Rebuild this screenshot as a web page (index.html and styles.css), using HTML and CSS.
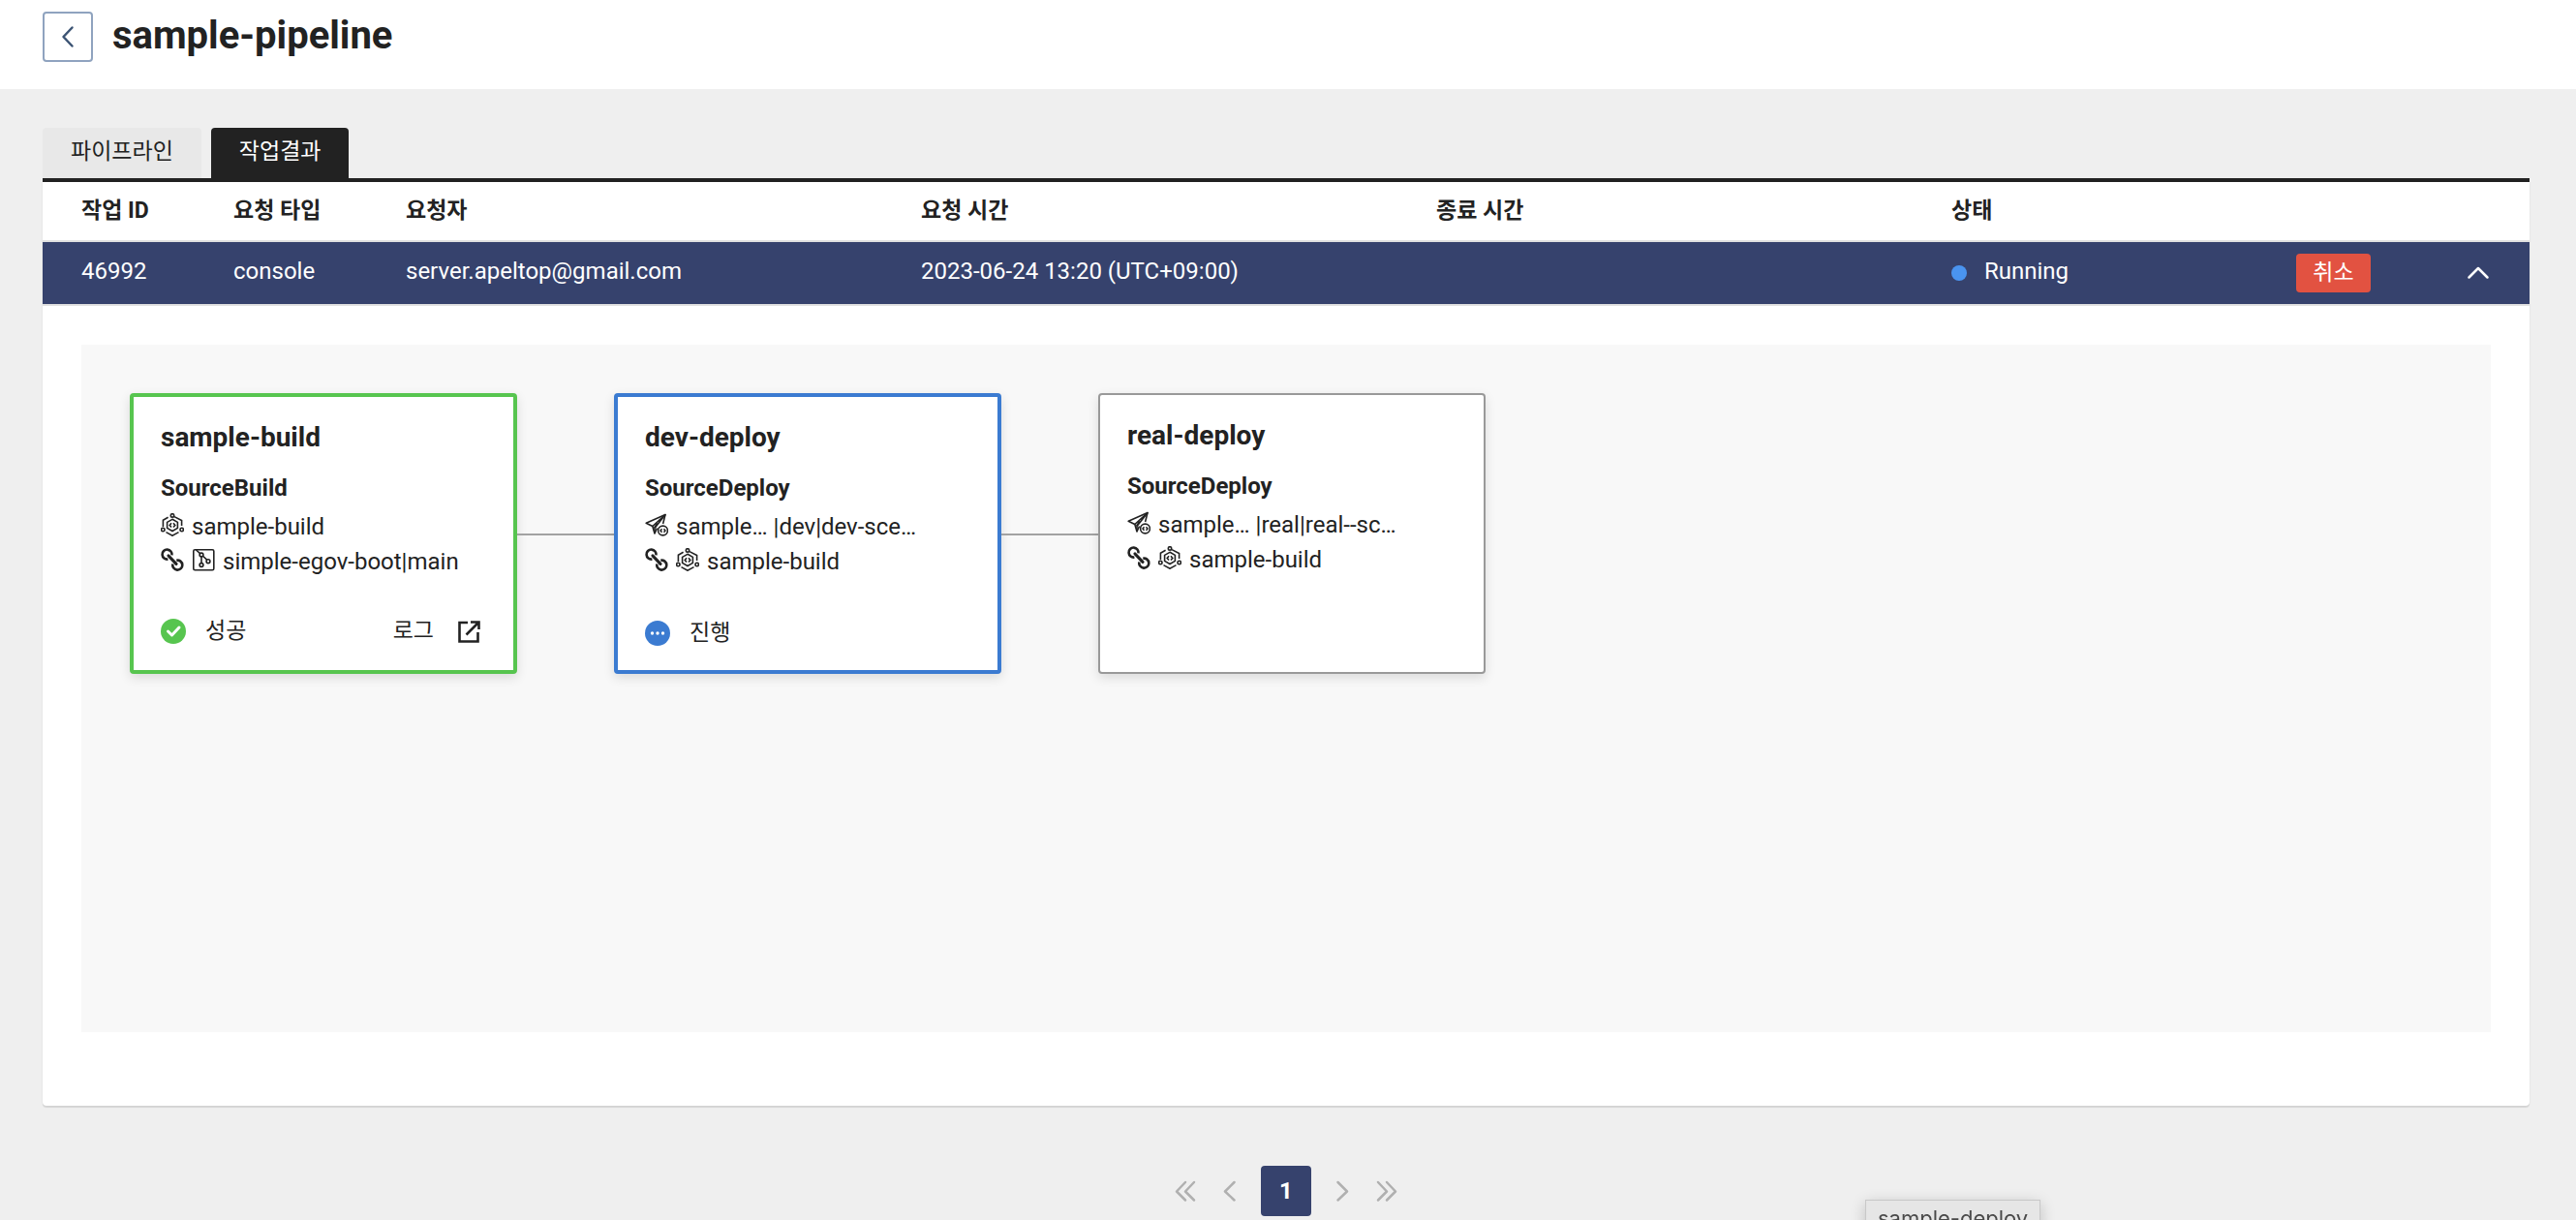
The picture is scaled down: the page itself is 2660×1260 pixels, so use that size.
FILE: index.html
```html
<!DOCTYPE html>
<html lang="ko">
<head>
<meta charset="utf-8">
<title>sample-pipeline</title>
<link rel="stylesheet" href="styles.css">
</head>
<body>
<svg class="sprite" aria-hidden="true">
  <symbol id="icon-build" viewBox="0 0 24 24">
    <g fill="none" stroke="currentColor" stroke-width="1.6">
      <path d="M7.600 4.300 2.400 7.300V14M14 3.600l7.600 4V13M5.500 19.600 12 23.200l6.500-3.600"/>
      <circle cx="12" cy="2.400" r="1.700"/><circle cx="2.300" cy="17" r="1.700"/><circle cx="21.700" cy="17" r="1.700"/>
      <path d="M12 6.300l5.400 3.100v6L12 18.500l-5.400-3.100v-6z"/>
      <path d="M11 10.300 9.200 12.400 11 14.500M13 10.300l1.800 2.100-1.800 2.100"/>
    </g>
  </symbol>
  <symbol id="icon-link" viewBox="0 0 24 24">
    <g fill="none" stroke="currentColor" stroke-width="2.600">
      <path d="M7.400 11.500A5 5 0 1 1 11.500 7.400"/>
      <path d="M16.300 12.700A5 5 0 1 1 12.400 16.500"/>
      <path d="M8 8 16 16.300" stroke-width="3.200" stroke-linecap="round"/>
    </g>
  </symbol>
  <symbol id="icon-repo" viewBox="0 0 24 24">
    <g fill="none" stroke="currentColor" stroke-width="1.600">
      <rect x="1.800" y="1.800" width="21" height="21" rx="1.500"/>
      <path d="M4.500 2 9.200 6.200M10 8.500V15.500M11.200 8 15.700 12.200"/>
      <circle cx="10" cy="7" r="1.900"/><circle cx="10" cy="17.500" r="1.900"/><circle cx="17" cy="13.700" r="1.900"/>
    </g>
  </symbol>
  <symbol id="icon-deploy" viewBox="0 0 24 24">
    <g fill="none" stroke="currentColor" stroke-width="1.600" stroke-linejoin="round">
      <path d="M12.500 15.500 10 21 7.800 13.500 1.200 10.300 21 1.500 18.600 11"/>
      <path d="M7.800 13.500 21 1.500 10 15.500V20.500M13 10.500 9.500 15"/>
      <circle cx="18.500" cy="18" r="4.900"/>
      <path d="M17.500 16.300 16 18 17.500 19.700M19.500 16.300l1.500 1.700-1.500 1.700"/>
    </g>
  </symbol>
</svg>

<header class="page-header">
  <button class="back" type="button" aria-label="뒤로">
    <svg width="24" height="24" viewBox="0 0 24 24"><path d="M16.500 2.500 7.500 12l9 9.500"/></svg>
  </button>
  <h1 class="page-title">sample-pipeline</h1>
</header>

<main class="content">
  <nav class="tabs">
    <button class="tab" type="button">파이프라인</button>
    <button class="tab tab-active" type="button">작업결과</button>
  </nav>

  <section class="result">
    <table class="jobs">
      <colgroup>
        <col class="col-id"><col class="col-type"><col><col><col><col><col class="col-toggle">
      </colgroup>
      <thead>
        <tr><th>작업 ID</th><th>요청 타입</th><th>요청자</th><th>요청 시간</th><th>종료 시간</th><th>상태</th><th></th></tr>
      </thead>
      <tbody>
        <tr>
          <td>46992</td>
          <td>console</td>
          <td>server.apeltop@gmail.com</td>
          <td>2023-06-24 13:20 (UTC+09:00)</td>
          <td></td>
          <td class="cell-control">
            <div class="status">
              <span class="dot"></span>
              <span class="status-text">Running</span>
              <button class="cancel" type="button">취소</button>
            </div>
          </td>
          <td class="cell-control">
            <button class="toggle" type="button" aria-label="접기">
              <svg width="24" height="24" viewBox="0 0 24 24"><path d="M2.500 16.500 12 7l9.500 9.500"/></svg>
            </button>
          </td>
        </tr>
      </tbody>
    </table>

    <div class="detail">
      <div class="canvas">
        <article class="stage stage-success">
          <h2 class="stage-name">sample-build</h2>
          <h3 class="stage-type">SourceBuild</h3>
          <p class="stage-line"><svg class="icon"><use href="#icon-build"/></svg><span>sample-build</span></p>
          <p class="stage-line"><svg class="icon"><use href="#icon-link"/></svg><svg class="icon"><use href="#icon-repo"/></svg><span>simple-egov-boot|main</span></p>
          <footer class="stage-footer">
            <svg class="state" viewBox="0 0 26 26"><circle cx="13" cy="13" r="13" fill="#57c54f"/><path d="M7.500 13l4 4 7.500-8" fill="none" stroke="#fff" stroke-width="3" stroke-linecap="round" stroke-linejoin="round"/></svg>
            <span>성공</span>
            <a class="log" href="#log">로그
              <svg class="log-icon" viewBox="0 0 24 24"><path d="M11 3H2.500v19.500H21.500V13M14 2.500h8.500V10M22 3 9.500 15.500" fill="none" stroke="currentColor" stroke-width="2.600"/></svg>
            </a>
          </footer>
        </article>
        <div class="connector"></div>
        <article class="stage stage-running">
          <h2 class="stage-name">dev-deploy</h2>
          <h3 class="stage-type">SourceDeploy</h3>
          <p class="stage-line"><svg class="icon"><use href="#icon-deploy"/></svg><span>sample… |dev|dev-sce…</span></p>
          <p class="stage-line"><svg class="icon"><use href="#icon-link"/></svg><svg class="icon"><use href="#icon-build"/></svg><span>sample-build</span></p>
          <footer class="stage-footer">
            <svg class="state" viewBox="0 0 26 26"><circle cx="13" cy="13" r="13" fill="#3b7bd1"/><g fill="#fff"><circle cx="7.500" cy="13" r="1.700"/><circle cx="13" cy="13" r="1.700"/><circle cx="18.500" cy="13" r="1.700"/></g></svg>
            <span>진행</span>
          </footer>
        </article>
        <div class="connector"></div>
        <article class="stage">
          <h2 class="stage-name">real-deploy</h2>
          <h3 class="stage-type">SourceDeploy</h3>
          <p class="stage-line"><svg class="icon"><use href="#icon-deploy"/></svg><span>sample… |real|real--sc…</span></p>
          <p class="stage-line"><svg class="icon"><use href="#icon-link"/></svg><svg class="icon"><use href="#icon-build"/></svg><span>sample-build</span></p>
        </article>
      </div>
    </div>
  </section>

  <nav class="pager" aria-label="페이지">
    <button class="pager-step" type="button" aria-label="처음"><svg width="26" height="24" viewBox="0 0 26 24"><path d="M12 3 3 12.500l9 9M21 3l-9 9.500 9 9"/></svg></button>
    <button class="pager-step" type="button" aria-label="이전"><svg width="24" height="24" viewBox="0 0 24 24"><path d="M16.500 3 7 12.500l9.500 9"/></svg></button>
    <button class="pager-page" type="button">1</button>
    <button class="pager-step" type="button" aria-label="다음"><svg width="24" height="24" viewBox="0 0 24 24"><path d="M7.500 3l9.500 9.500-9.500 9"/></svg></button>
    <button class="pager-step" type="button" aria-label="마지막"><svg width="26" height="24" viewBox="0 0 26 24"><path d="M14 3l9 9.500-9 9M5 3l9 9.500-9 9"/></svg></button>
  </nav>
</main>
<div class="tooltip" role="tooltip">sample-deploy</div>
</body>
</html>
```
FILE: styles.css
```css
* {
  box-sizing: border-box;
}

body {
  margin: 0;
  background: #efefef;
  color: #222;
  font: 24px/36px Roboto, "Noto Sans CJK KR", sans-serif;
}

button {
  padding: 0;
  border: 0;
  background: none;
  color: inherit;
  font: inherit;
}

h1, h2, h3, p {
  margin: 0;
}

svg {
  display: block;
}

button path {
  fill: none;
  stroke: currentColor;
  stroke-width: 2.5;
  stroke-linecap: round;
  stroke-linejoin: round;
}

.sprite {
  position: absolute;
  width: 0;
  height: 0;
}

.page-header {
  display: flex;
  align-items: flex-start;
  gap: 20px;
  height: 92px;
  padding: 12px 44px;
  background: #fff;
}

.back {
  display: grid;
  place-items: center;
  width: 52px;
  height: 52px;
  border: 2px solid #8fa3bf;
  border-radius: 4px;
  color: #3c5474;
}

.page-title {
  font-size: 40px;
  line-height: 50px;
}

.content {
  padding: 40px 48px 0 44px;
}

.tabs {
  display: flex;
  gap: 10px;
  border-bottom: 4px solid #222;
}

.tab {
  height: 52px;
  padding: 0 29px 2px;
  border-radius: 4px 4px 0 0;
  background: #e8e8e8;
  font-size: 23px;
}

.tab-active {
  background: #222;
  color: #fff;
}

.result {
  border-radius: 0 0 4px 4px;
  background: #fff;
  box-shadow: 0 2px 1px rgba(0, 0, 0, 0.1), 0 0 2px rgba(0, 0, 0, 0.08);
}

.jobs {
  width: 100%;
  table-layout: fixed;
  border-collapse: separate;
  border-spacing: 0;
}

.col-id {
  width: 176px;
}

.col-type {
  width: 178px;
}

.col-toggle {
  width: 86px;
}

.jobs th,
.jobs td {
  padding: 0 0 0 21px;
  border-bottom: 2px solid #e1e1e1;
  text-align: left;
  white-space: nowrap;
}

.jobs th:first-child,
.jobs td:first-child {
  padding-left: 40px;
}

.jobs th {
  height: 62px;
  font-size: 23px;
}

.jobs td {
  height: 66px;
  padding-bottom: 4px;
  background: #36426d;
  background-clip: padding-box;
  color: #fff;
}

.jobs .cell-control {
  padding-bottom: 0;
}

.status {
  display: flex;
  align-items: center;
  padding-right: 78px;
}

.status-text {
  padding-bottom: 4px;
}

.dot {
  width: 16px;
  height: 16px;
  margin-right: 18px;
  border-radius: 50%;
  background: #4a94f0;
}

.cancel {
  width: 77px;
  height: 40px;
  margin-left: auto;
  border-radius: 4px;
  background: #e25241;
  font-size: 23px;
}

.toggle {
  display: block;
}

.detail {
  padding: 40px 40px 76px;
}

.canvas {
  display: flex;
  align-items: flex-start;
  min-height: 710px;
  padding: 50px;
  background: #f8f8f8;
}

.connector {
  width: 100px;
  height: 2px;
  margin-top: 145px;
  background: #a2a2a2;
}

.stage {
  display: flex;
  flex-direction: column;
  width: 400px;
  height: 290px;
  padding: 24px 28px 20px;
  border: 2px solid #999;
  border-radius: 4px;
  background: #fff;
  box-shadow: 0 4px 12px rgba(0, 0, 0, 0.12);
}

.stage-success {
  border: 4px solid #57c54f;
}

.stage-running {
  border: 4px solid #3b7bd1;
}

.stage-name {
  margin-bottom: 16px;
  font-size: 28px;
  line-height: 36px;
}

.stage-type {
  margin-bottom: 4px;
  font-size: 24px;
  line-height: 36px;
}

.stage-line {
  display: flex;
  gap: 8px;
  line-height: 36px;
}

.icon {
  width: 24px;
  height: 24px;
  margin-top: 4px;
}

.stage-footer {
  display: flex;
  align-items: center;
  gap: 20px;
  margin-top: auto;
  font-size: 23px;
}

.state {
  width: 26px;
  height: 26px;
}

.log {
  display: flex;
  align-items: center;
  gap: 24px;
  margin: 0 6px 0 auto;
  color: inherit;
  line-height: 40px;
  text-decoration: none;
}

.log-icon {
  width: 24px;
  height: 24px;
}

.pager {
  display: flex;
  justify-content: center;
  align-items: center;
  gap: 20px;
  padding-top: 62px;
  color: #b0b0b0;
}

.pager-page {
  width: 52px;
  height: 52px;
  border-radius: 4px;
  background: #36426d;
  color: #fff;
  font-weight: 700;
}

.tooltip {
  position: fixed;
  bottom: -17px;
  left: 1926px;
  padding: 0 12px;
  border: 1px solid #c8c8c8;
  background: #e6e6e6;
  color: #4a4a4a;
  box-shadow: 0 4px 16px rgba(0, 0, 0, 0.2);
  font: 22px/36px Inter, sans-serif;
}
```
